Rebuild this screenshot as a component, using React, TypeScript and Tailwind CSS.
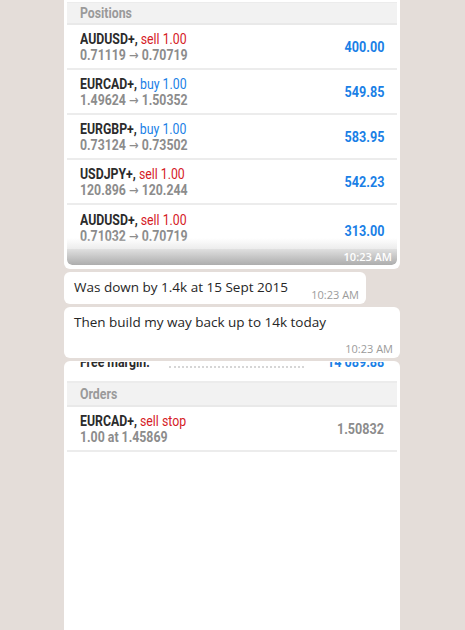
import React from "react";

type Side = "sell" | "buy";

const positions: { sym: string; side: Side; from: string; to: string; profit: string }[] = [
  { sym: "AUDUSD+", side: "sell", from: "0.71119", to: "0.70719", profit: "400.00" },
  { sym: "EURCAD+", side: "buy", from: "1.49624", to: "1.50352", profit: "549.85" },
  { sym: "EURGBP+", side: "buy", from: "0.73124", to: "0.73502", profit: "583.95" },
  { sym: "USDJPY+", side: "sell", from: "120.896", to: "120.244", profit: "542.23" },
  { sym: "AUDUSD+", side: "sell", from: "0.71032", to: "0.70719", profit: "313.00" },
];

const mt = { fontFamily: "Roboto, 'Liberation Sans', sans-serif" };
const wa = { fontFamily: "'Open Sans', 'Liberation Sans', sans-serif" };
const arrowFont = { fontFamily: "'DejaVu Sans', sans-serif" };

// condensed look: Roboto squeezed horizontally
function Cond({ children, right, className = "" }: { children: React.ReactNode; right?: boolean; className?: string }) {
  return (
    <span
      className={`inline-block whitespace-nowrap ${right ? "origin-right scale-x-[0.84]" : "origin-left scale-x-[0.82]"} ${className}`}
    >
      {children}
    </span>
  );
}

function SectionHeader({ title, tall }: { title: string; tall?: boolean }) {
  return (
    <div
      className={`flex items-center border-b-2 border-[#e9e9e9] bg-[#f2f2f2] px-[13px] text-[15px] font-bold text-[#9a9a9a] ${tall ? "h-[24px]" : "h-[22px]"}`}
    >
      <Cond>{title}</Cond>
    </div>
  );
}

function PositionRow({ p, last }: { p: (typeof positions)[number]; last?: boolean }) {
  return (
    <div
      className={`relative flex px-[13px] ${last ? "h-[60px] items-start pt-[7px]" : "h-[45px] items-center border-b-2 border-[#ececec] pt-[1px]"}`}
    >
      <div className="flex flex-col text-[15px] leading-[16px]">
        <Cond>
          <span className="font-bold text-[#2b2b2b]">{p.sym}, </span>
          <span className={p.side === "sell" ? "text-[#d5201f]" : "text-[#1a7fe6]"}>{p.side} 1.00</span>
        </Cond>
        <Cond className="font-bold text-[#8c8c8c]">
          {p.from}{" "}
          <span style={arrowFont} className="text-[14px] font-normal">
            →
          </span>{" "}
          {p.to}
        </Cond>
      </div>
      <div className={`ml-auto text-[15px] font-bold text-[#1a7fe6] ${last ? "mt-[8px]" : ""}`}>
        <Cond right>{p.profit}</Cond>
      </div>
      {last && (
        <div className="absolute inset-x-0 bottom-0 flex h-[27px] flex-col">
          <div className="h-[12px] bg-gradient-to-b from-white/0 to-[#ececec]" />
          <div className="flex flex-1 items-center justify-end rounded-b-[5px] bg-gradient-to-b from-[#e0e0e0] to-[#adadad] pr-[5px]">
            <span style={wa} className="text-[11px] font-semibold text-white">
              10:23 AM
            </span>
          </div>
        </div>
      )}
    </div>
  );
}

function TextBubble({ text, wide }: { text: string; wide?: boolean }) {
  if (!wide) {
    return (
      <div style={wa} className="flex w-[302px] items-end rounded-[6px] bg-white pb-[3px] pl-[10px] pr-[7px] pt-[6px]">
        <span className="pb-[4px] text-[13.5px] leading-[19px] text-[#262626]">{text}</span>
        <span className="ml-auto text-[11px] leading-[13px] text-[#9b9b9b]">10:23 AM</span>
      </div>
    );
  }
  return (
    <div style={wa} className="flex w-[336px] flex-col rounded-[6px] bg-white pb-[3px] pl-[10px] pr-[7px] pt-[6px]">
      <span className="text-[13.5px] leading-[19px] text-[#262626]">{text}</span>
      <span className="mt-[10px] self-end text-[11px] leading-[13px] text-[#9b9b9b]">10:23 AM</span>
    </div>
  );
}

export default function App() {
  return (
    <div className="h-[630px] w-[465px] overflow-hidden bg-[#e4ddd9] pl-[64px]">
      <div className="flex flex-col gap-[3px]">
        {/* positions screenshot */}
        <div className="w-[336px] rounded-b-[6px] bg-white px-[3px] pb-[4px]">
          <div style={mt} className="overflow-hidden rounded-b-[5px]">
            <div className="h-[3px] border-b border-[#ececec] bg-white" />
            <SectionHeader title="Positions" />
            {positions.map((p, i) => (
              <PositionRow key={i} p={p} last={i === positions.length - 1} />
            ))}
          </div>
        </div>

        <TextBubble text="Was down by 1.4k at 15 Sept 2015" />
        <TextBubble text="Then build my way back up to 14k today" wide />

        {/* orders screenshot */}
        <div className="h-[280px] w-[336px] rounded-t-[6px] bg-white px-[3px] pt-[1px]">
          <div style={mt}>
            <div className="flex h-[21px] items-start overflow-hidden border-b-2 border-[#ececec] px-[13px] text-[15px] font-bold leading-[16px]">
              <span className="-mt-[8px] text-[#2b2b2b]">
                <Cond>Free margin:</Cond>
              </span>
              <span className="ml-[4px] mr-[12px] mt-[4px] h-0 flex-1 border-t-2 border-dotted border-[#d6d6d6]" />
              <span className="-mt-[8px] text-[#1a7fe6]">
                <Cond right>14 089.88</Cond>
              </span>
            </div>
            <SectionHeader title="Orders" tall />
            <div className="flex h-[45px] items-center border-b-2 border-[#ececec] px-[13px] pt-[1px]">
              <div className="flex flex-col text-[15px] leading-[16px]">
                <Cond>
                  <span className="font-bold text-[#2b2b2b]">EURCAD+, </span>
                  <span className="text-[#d5201f]">sell stop</span>
                </Cond>
                <Cond className="font-bold text-[#8c8c8c]">1.00 at 1.45869</Cond>
              </div>
              <div className="ml-auto text-[15px] font-bold text-[#8c8c8c]">
                <Cond right>1.50832</Cond>
              </div>
            </div>
          </div>
        </div>
      </div>
    </div>
  );
}
